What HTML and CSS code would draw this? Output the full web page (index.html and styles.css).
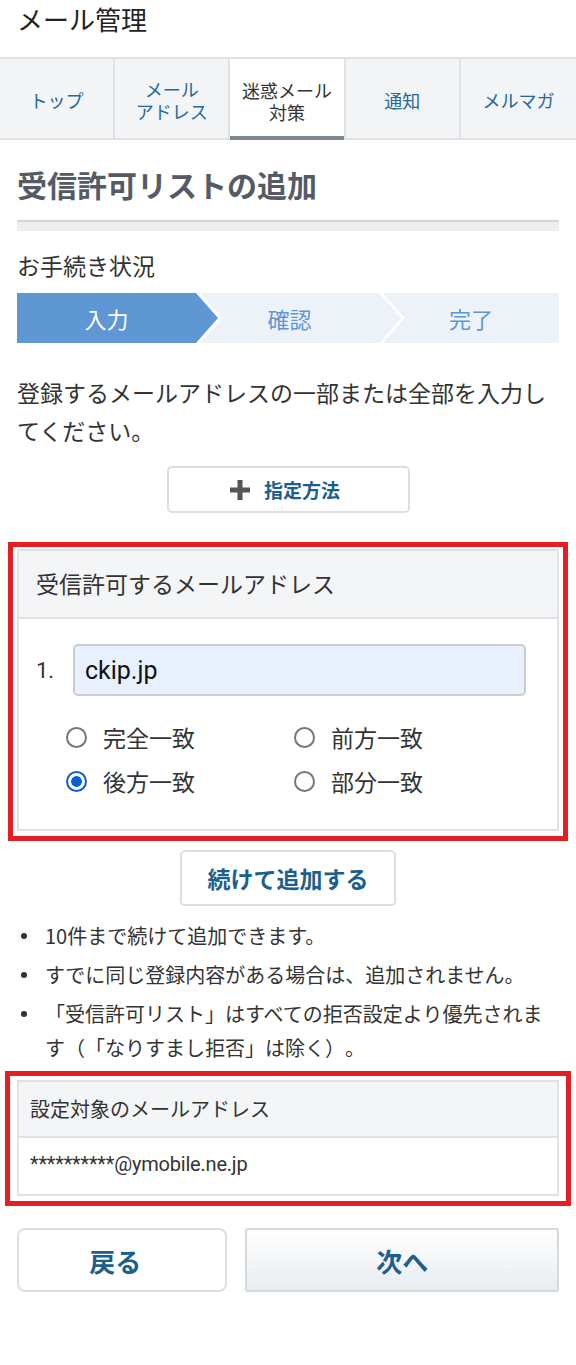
FILE: index.html
```html
<!DOCTYPE html>
<html lang="ja">
<head>
<meta charset="utf-8">
<title>メール管理</title>
<link rel="stylesheet" href="styles.css">
</head>
<body>
<header class="app-title">メール管理</header>
<nav class="tabs">
  <a class="tab">トップ</a>
  <a class="tab"><span class="tab-line">メール</span><span class="tab-line">アドレス</span></a>
  <a class="tab is-active"><span class="tab-line">迷惑メール</span><span class="tab-line">対策</span></a>
  <a class="tab">通知</a>
  <a class="tab">メルマガ</a>
</nav>
<main class="content">
  <h1 class="page-heading">受信許可リストの追加</h1>
  <div class="heading-rule"></div>
  <p class="status-label">お手続き状況</p>
  <ol class="steps">
    <li class="step step-first is-current">入力</li>
    <li class="step step-mid">確認</li>
    <li class="step step-last">完了</li>
  </ol>
  <p class="lead">登録するメールアドレスの一部または全部を入力してください。</p>
  <div class="center-row">
    <button class="btn btn-method" type="button">
      <svg class="plus-icon" width="20" height="20" viewBox="0 0 20 20" aria-hidden="true"><rect x="7.5" y="0" width="5" height="20" fill="#555"/><rect x="0" y="7.5" width="20" height="5" fill="#555"/></svg>
      <span>指定方法</span>
    </button>
  </div>

  <section class="panel panel-form annotated annotated-a">
    <div class="panel-head">受信許可するメールアドレス</div>
    <div class="panel-body">
      <div class="entry-row">
        <span class="entry-no">1.</span>
        <input class="entry-input" type="text" value="ckip.jp">
      </div>
      <div class="radio-grid">
        <label class="radio-item"><input type="radio" name="m" class="radio"><span>完全一致</span></label>
        <label class="radio-item"><input type="radio" name="m" class="radio"><span>前方一致</span></label>
        <label class="radio-item"><input type="radio" name="m" class="radio" checked><span>後方一致</span></label>
        <label class="radio-item"><input type="radio" name="m" class="radio"><span>部分一致</span></label>
      </div>
    </div>
  </section>

  <div class="center-row">
    <button class="btn btn-add" type="button">続けて追加する</button>
  </div>

  <ul class="notes">
    <li>10件まで続けて追加できます。</li>
    <li>すでに同じ登録内容がある場合は、追加されません。</li>
    <li>「受信許可リスト」はすべての拒否設定より優先されます（「なりすまし拒否」は除く）。</li>
  </ul>

  <section class="panel panel-target annotated annotated-b">
    <div class="panel-head">設定対象のメールアドレス</div>
    <div class="panel-body">**********@ymobile.ne.jp</div>
  </section>

  <div class="action-row">
    <button class="btn btn-back" type="button"><span class="btn-back-label">戻る</span></button>
    <button class="btn btn-next" type="button">次へ</button>
  </div>
</main>
</body>
</html>
```
FILE: styles.css
```css
* { box-sizing: border-box; }

html, body {
  margin: 0;
  padding: 0;
  background: #fff;
}

body {
  font-family: "Noto Sans CJK JP", "Noto Sans", sans-serif;
  color: #333;
  width: 576px;
  text-spacing-trim: space-all;
}

.app-title {
  height: 57px;
  padding-left: 17px;
  font-size: 26px;
  line-height: 38px;
  color: #222;
}

.tabs {
  display: grid;
  grid-template-columns: repeat(5, 1fr);
  height: 83px;
  border-top: 2px solid #dfe1e4;
  background: #f3f4f6;
}

.tab {
  display: flex;
  flex-direction: column;
  align-items: center;
  justify-content: center;
  text-align: center;
  font-size: 18px;
  line-height: 22px;
  color: #23699b;
  border-right: 2px solid #dfe1e4;
  border-bottom: 2px solid #dfe1e4;
  padding-top: 2px;
}

.tab-line {
  display: block;
}

.tab:last-child { border-right: none; }

.tab.is-active {
  background: #fff;
  color: #333;
  border-bottom: none;
  box-shadow: inset 0 -4px 0 #7b8793;
  margin-left: -2px;
  border-left: 2px solid #dfe1e4;
}

.content {
  padding: 0 17px 40px 17px;
}

.page-heading {
  margin: 24px 0 0;
  font-size: 30px;
  line-height: 40px;
  font-weight: 700;
  color: #555b65;
}

.heading-rule {
  margin-top: 16px;
  height: 11px;
  border-top: 2px solid #d5d5d5;
  background: #eeeeee;
}

.status-label {
  margin: 17px 0 0;
  font-size: 23px;
  line-height: 34px;
  color: #333;
}

.steps {
  list-style: none;
  margin: 11px 0 0;
  padding: 0;
  display: flex;
  height: 50px;
}

.step {
  display: flex;
  align-items: center;
  justify-content: center;
  font-size: 22px;
  background: #edf2f9;
  color: #5f96d4;
}

.step + .step { margin-left: -18px; }

.step-first {
  flex: 0 0 201px;
  clip-path: polygon(0 0, calc(100% - 22px) 0, 100% 50%, calc(100% - 22px) 100%, 0 100%);
  padding-right: 22px;
}

.step-mid {
  flex: 0 0 201px;
  clip-path: polygon(0 0, calc(100% - 22px) 0, 100% 50%, calc(100% - 22px) 100%, 0 100%, 22px 50%);
  padding-right: 22px;
}

.step-last {
  flex: 1 1 0;
  clip-path: polygon(0 0, 100% 0, 100% 100%, 0 100%, 22px 50%);
}

.step.is-current {
  background: #5f96d4;
  color: #fff;
}

.lead {
  margin: 30px 0 0;
  font-size: 23px;
  line-height: 38px;
  color: #333;
}

.center-row {
  display: flex;
  justify-content: center;
}

.btn {
  font-family: "Noto Sans CJK JP", "Noto Sans", sans-serif;
  background: #fff;
  border: 2px solid #dcdee1;
  border-radius: 5px;
  color: #1b5f8e;
  font-weight: 700;
  display: flex;
  align-items: center;
  justify-content: center;
  padding: 0;
}

.btn-method {
  margin-top: 17px;
  width: 243px;
  height: 47px;
  font-size: 19px;
  gap: 14px;
  padding-right: 6px;
}

.plus-icon { display: block; }

.panel {
  border: 2px solid #e0e2e5;
  background: #fff;
}

.annotated { position: relative; }

.annotated::after {
  content: "";
  position: absolute;
  border: 5px solid #e81c24;
  pointer-events: none;
}

.annotated-a::after { top: -9px; left: -11px; right: -11px; bottom: -12px; }
.annotated-b::after { top: -11px; left: -14px; right: -14px; bottom: -12px; }

.panel-form { margin-top: 36px; }

.panel-head {
  background: #f4f5f7;
  border-bottom: 2px solid #e0e2e5;
}

.panel-form .panel-head {
  padding: 15px 17px 17px;
  font-size: 23px;
  line-height: 34px;
}

.panel-form .panel-body {
  padding: 25px 31px 26px 17px;
}

.entry-row {
  display: flex;
  align-items: center;
}

.entry-no {
  width: 37px;
  font-family: Roboto, "Noto Sans", sans-serif;
  font-size: 22px;
  color: #333;
}

.entry-input {
  flex: 1;
  height: 52px;
  background: #e8f0fe;
  border: 2px solid #c9ccd0;
  border-radius: 5px;
  padding: 0 10px;
  font-family: Roboto, "Noto Sans", sans-serif;
  font-size: 25px;
  color: #111;
  outline: none;
}

.radio-grid {
  margin: 19px 0 0 30px;
  display: grid;
  grid-template-columns: 228px 1fr;
  grid-auto-rows: 44px;
}

.radio-item {
  display: flex;
  align-items: center;
  gap: 16px;
  font-size: 23px;
  color: #333;
}

.radio {
  appearance: none;
  -webkit-appearance: none;
  margin: 0;
  width: 21px;
  height: 21px;
  border-radius: 50%;
  border: 2px solid #767676;
  background: #fff;
  flex: none;
}

.radio:checked {
  border-color: #0b61d4;
  background: radial-gradient(circle, #0b61d4 0 5px, #fff 5.6px);
}

.btn-add {
  margin-top: 19px;
  width: 216px;
  height: 56px;
  font-size: 23px;
}

.notes {
  list-style: none;
  margin: 13px 0 0;
  padding: 0;
  font-size: 20px;
  line-height: 34px;
  color: #333;
}

.notes li {
  display: flex;
}

.notes li + li { margin-top: 5px; }

.notes li::before {
  content: "";
  flex: none;
  width: 6px;
  height: 6px;
  border-radius: 50%;
  background: #333;
  margin: 14px 18px 0 4px;
}

.panel-target { margin-top: 15px; }

.panel-target .panel-head {
  padding: 12px 11px;
  font-size: 20px;
  line-height: 30px;
}

.panel-target .panel-body {
  padding: 12px 11px 16px;
  font-family: Roboto, "Noto Sans", sans-serif;
  font-size: 20px;
  line-height: 28px;
  color: #333;
  letter-spacing: -0.2px;
}

.action-row {
  margin-top: 32px;
  display: flex;
  gap: 18px;
}

.btn-back {
  flex: 2 1 0;
  min-width: 0;
  height: 64px;
  font-size: 26px;
  border-radius: 8px;
}

.btn-back-label { margin-right: 14px; }

.btn-next {
  flex: 3 1 0;
  min-width: 0;
  height: 64px;
  font-size: 26px;
  border-radius: 3px;
  background: linear-gradient(#ffffff, #e8ecf0);
  border-color: #d5d8dc;
}
```
